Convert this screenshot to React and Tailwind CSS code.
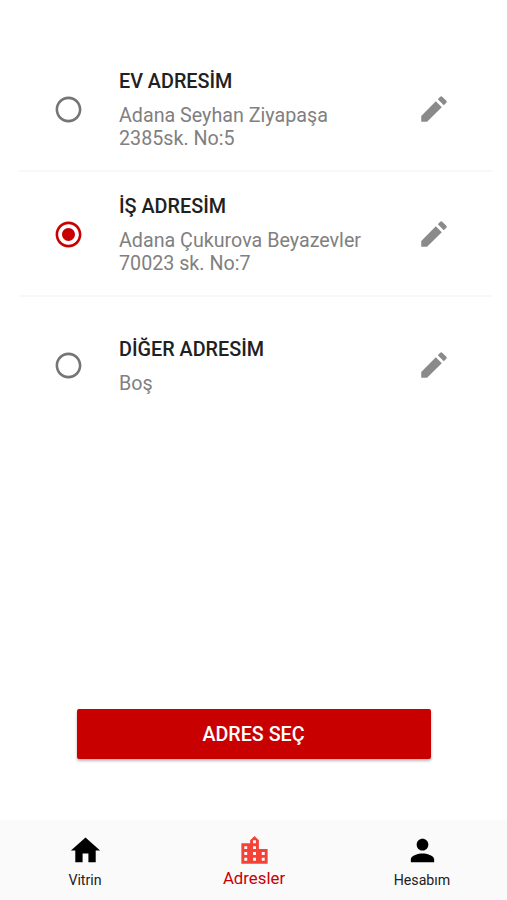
import { useState } from 'react';
import clsx from 'clsx';
import {
  MdHome,
  MdLocationCity,
  MdPerson,
  MdRadioButtonChecked,
  MdRadioButtonUnchecked,
} from 'react-icons/md';

const addresses = [
  { id: 'home', title: 'EV ADRESİM', lines: ['Adana Seyhan Ziyapaşa', '2385sk. No:5'] },
  { id: 'work', title: 'İŞ ADRESİM', lines: ['Adana Çukurova Beyazevler', '70023 sk. No:7'] },
  { id: 'other', title: 'DİĞER ADRESİM', lines: ['Boş'] },
];

const tabs = [
  { id: 'showcase', label: 'Vitrin', icon: MdHome },
  { id: 'addresses', label: 'Adresler', icon: MdLocationCity },
  { id: 'account', label: 'Hesabım', icon: MdPerson },
];

const PencilIcon = ({ className }) => (
  <svg viewBox="0 0 24 24" fill="currentColor" className={className} aria-hidden="true">
    <path d="M3 16.9V21h4.1L17.5 10.7l-4.2-4.1z" />
    <path d="M20.7 7.6a1 1 0 0 0 0-1.4l-2.9-2.9a1 1 0 0 0-1.4 0l-1.7 1.8 4.2 4.2z" />
  </svg>
);

const AddressRow = ({ address, selected, onSelect }) => {
  const Radio = selected ? MdRadioButtonChecked : MdRadioButtonUnchecked;

  return (
    <li className="flex h-[125px] items-center border-b-2 border-[#f8f8f8] pl-[34px] pr-[41px] last:h-[136px] last:border-b-0">
      <button type="button" aria-label={address.title} onClick={onSelect} className="mt-px shrink-0">
        <Radio className={clsx('size-[31px]', selected ? 'text-[#c80000]' : 'text-[#757575]')} />
      </button>
      <div className="ml-[35px] flex-1 whitespace-nowrap pt-1">
        <h2 className="text-[19.8px] font-medium leading-[22px] text-[#212121]">{address.title}</h2>
        <div className="mt-3 text-[19.7px] leading-[22.5px] text-[#808080]">
          {address.lines.map((line) => (
            <p key={line}>{line}</p>
          ))}
        </div>
      </div>
      <button type="button" aria-label="Düzenle" className="shrink-0">
        <PencilIcon className="size-[34px] text-[#8a8a8a]" />
      </button>
    </li>
  );
};

const App = () => {
  const [selectedId, setSelectedId] = useState('work');
  const [activeTab, setActiveTab] = useState('addresses');

  return (
    <div className="flex h-screen flex-col bg-white font-['Roboto',sans-serif]">
      <main className="flex flex-1 flex-col">
        <ul className="ml-[19px] mr-[15px] mt-[47px]">
          {addresses.map((address) => (
            <AddressRow
              key={address.id}
              address={address}
              selected={address.id === selectedId}
              onSelect={() => setSelectedId(address.id)}
            />
          ))}
        </ul>
        <button
          type="button"
          className="mx-auto mb-[61px] mt-auto h-[50px] w-[354px] rounded-[2px] bg-[#c80000] pt-0.5 text-[19.7px] font-medium text-white shadow-[0_2px_3px_rgba(0,0,0,0.28)]"
        >
          ADRES SEÇ
        </button>
      </main>

      <nav className="grid h-20 shrink-0 grid-cols-3 bg-[#fafafa]">
        {tabs.map(({ id, label, icon: Icon }) => {
          const active = id === activeTab;
          return (
            <button
              key={id}
              type="button"
              onClick={() => setActiveTab(id)}
              className="flex flex-col items-center pl-px pt-[13px] last:pl-0 last:pr-px"
            >
              <Icon className={clsx('size-[35px]', active ? 'text-[#f44336]' : 'text-black')} />
              <span
                className={clsx(
                  'leading-5',
                  active ? 'text-[16.8px] text-[#c80000]' : 'mt-0.5 text-[14.2px] text-[#212121]'
                )}
              >
                {label}
              </span>
            </button>
          );
        })}
      </nav>
    </div>
  );
};

export default App;
